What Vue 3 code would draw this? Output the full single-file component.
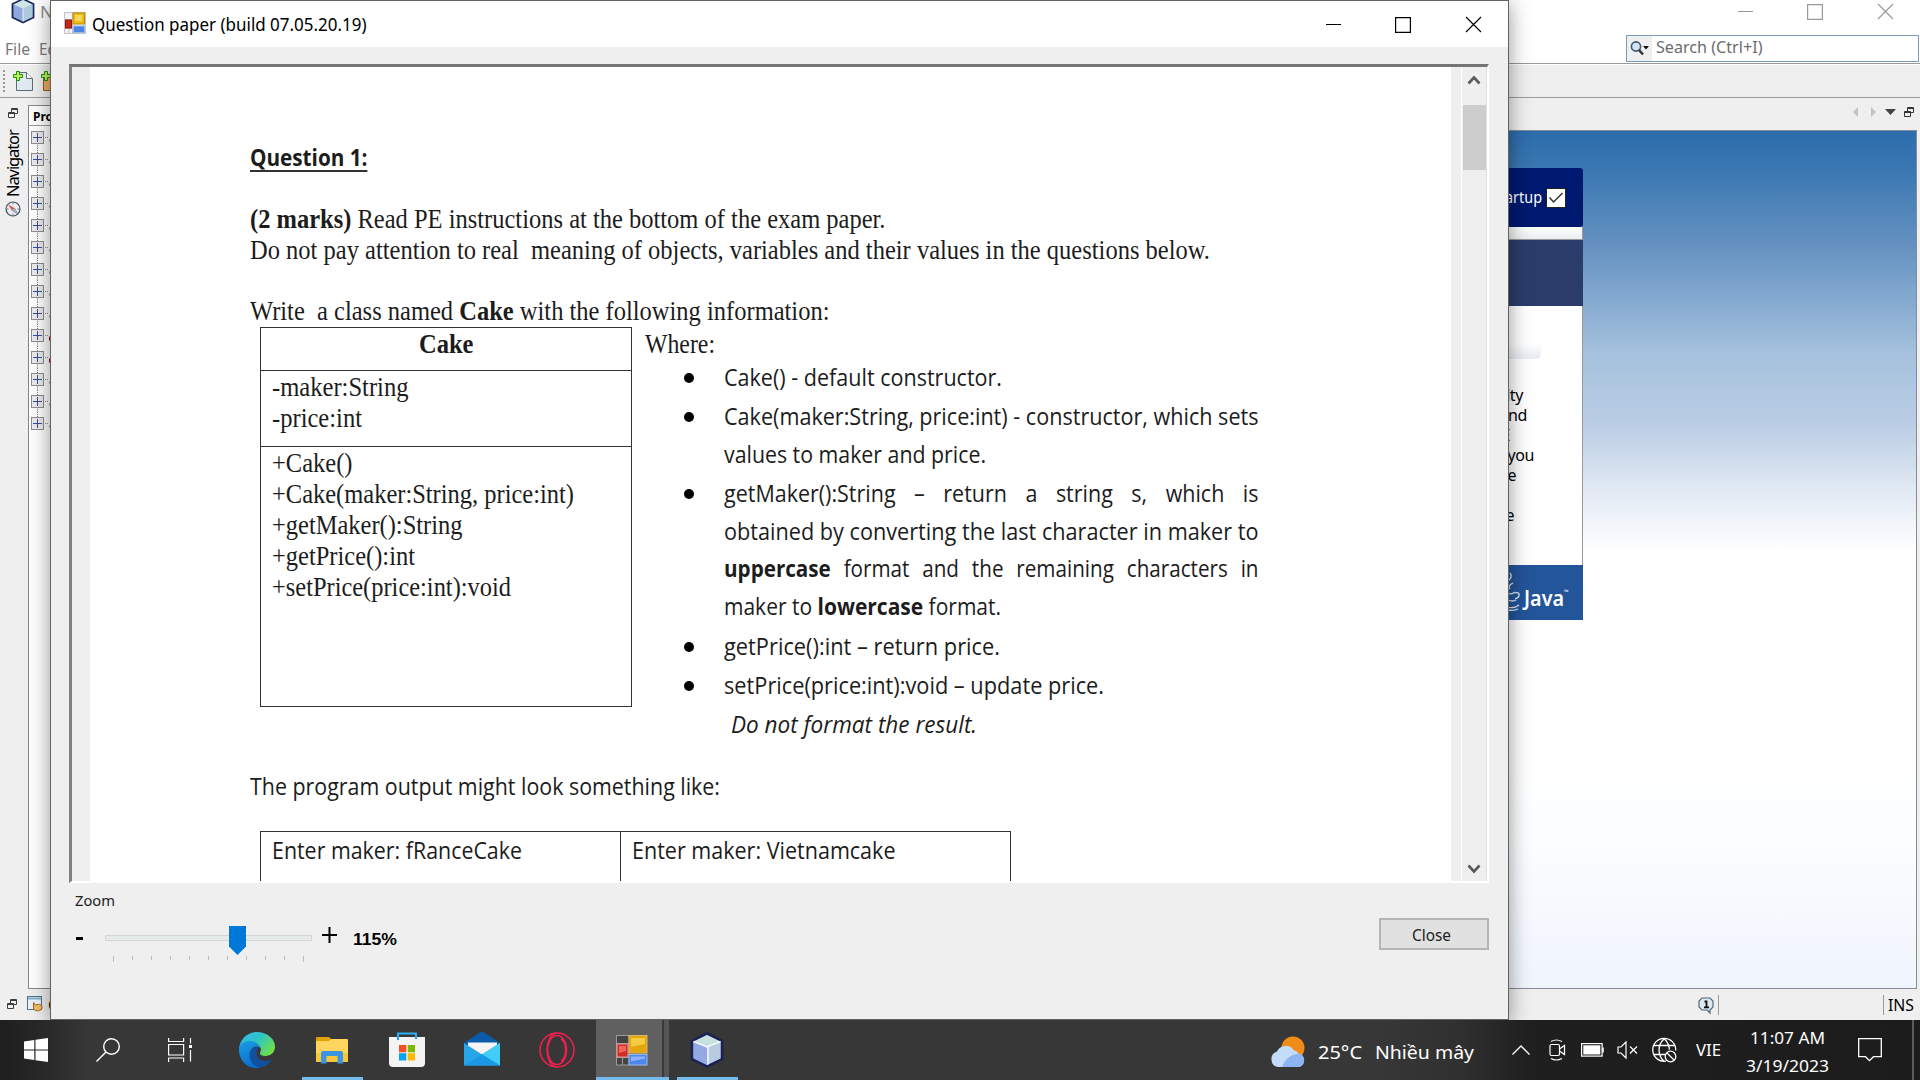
<script setup>
// Stretches a text run to a given width. With a `scale`, the glyphs keep
// that scale and only the word gaps grow (justified lines).
const vFit = {
  mounted(el, { value }) {
    const width = typeof value === 'number' ? value : value.width
    const natural = el.getBoundingClientRect().width
    let scale = width / natural
    let finalWidth = natural
    if (value.scale) {
      scale = value.scale
      const gaps = el.textContent.split(' ').length - 1
      el.style.wordSpacing = `${(width / scale - natural) / gaps}px`
      finalWidth = width / scale
    }
    el.style.transform = `scaleX(${scale})`
    el.style.marginRight = `${width - finalWidth}px`
  },
}

const fields = [
  ['-maker:String', 136.5],
  ['-price:int', 90],
]
const methods = [
  ['+Cake()', 80.5],
  ['+Cake(maker:String, price:int)', 302],
  ['+getMaker():String', 190.5],
  ['+getPrice():int', 143],
  ['+setPrice(price:int):void', 239],
]
const rules = [
  [['Cake() - default constructor.', 278]],
  [
    ['Cake(maker:String, price:int) - constructor, which sets', 534.5],
    ['values to maker and price.', 262],
  ],
  [
    ['getMaker():String – return a string s, which is', { width: 534.5, scale: 0.895 }],
    ['obtained by converting the last character in maker to', 534.5],
    ['<b>uppercase</b> format and the remaining characters in', { width: 534.5, scale: 0.86 }],
    ['maker to <b>lowercase</b> format.', 277],
  ],
  [['getPrice():int – return price.', 276]],
  [['setPrice(price:int):void – update price.', 380]],
]
const nodes = Array.from({ length: 14 }, (_, i) => i)
const ticks = Array.from({ length: 11 }, (_, i) => i)
const article = ['ity', 'and', 'E', 'you', 'e', '', 'e']
</script>

<template>
  <div class="desktop">
    <!-- IDE main window -->
    <section class="ide">
      <header class="ide-title">
        <svg class="ide-logo" width="24" height="24" viewBox="0 0 24 24">
          <path d="M12-1 22.500 4v13.500L12 22.500 1.500 17.500V4z" fill="#8fa9dc" stroke="#1b2859" stroke-width="1.800" />
          <path d="M2.500 4.500 12 0l9.500 4.500L12 8.500z" fill="#cfe6e6" />
          <path d="M12 8.500 21.500 4.500V17L12 21.500z" fill="#aec9dc" />
          <path d="M12 8.500V21.500" stroke="#eef" stroke-width="1" />
        </svg>
        <span class="ide-name">N</span>
        <svg class="ide-controls" width="156" height="17" viewBox="0 0 156 17" fill="none" stroke="#999" stroke-width="1.200">
          <path d="M0 8.500h15M69.600 1.600h14.800v14.800H69.600zM140 1l15 15M155 1l-15 15" />
        </svg>
      </header>
      <div class="ide-menu">
        <span class="menu-file" v-fit="25">File</span>
        <span class="menu-file" v-fit="27">Edit</span>
        <div class="search">
          <span class="search-icon">
            <svg width="20" height="18" viewBox="0 0 20 18">
              <circle cx="6" cy="6.500" r="4.600" fill="#cfe4f5" stroke="#44576b" stroke-width="1.600" />
              <path d="M9 10l4 4.500" stroke="#333" stroke-width="2.600" />
              <path d="M13 6h6l-3 3.500z" fill="#111" />
            </svg>
          </span>
          <span class="search-text" v-fit="106.500">Search (Ctrl+I)</span>
        </div>
      </div>
      <div class="ide-tools">
        <i class="grip"></i>
        <svg class="tool" width="20" height="20" viewBox="0 0 20 20">
          <path d="M3.500 1.500h10l6 6v12h-16z" fill="#dfe9f2" stroke="#5d6b7b" />
          <path d="M13.500 1.500v6h6" fill="#fff" stroke="#5d6b7b" />
          <path d="M3.500.5h3v3h3v3h-3v3h-3v-3h-3v-3h3z" fill="#b9f25a" stroke="#1d8a0d" />
        </svg>
        <svg class="tool2" width="20" height="20" viewBox="0 0 20 20">
          <path d="M2.500 3.500h17v16h-17z" fill="#efae63" stroke="#8c5d25" />
          <path d="M3.500.5h3v3h3v3h-3v3h-3v-3h-3v-3h3z" fill="#b9f25a" stroke="#1d8a0d" />
        </svg>
      </div>
      <div class="ide-main">
        <aside class="rail">
          <svg width="10" height="10" viewBox="0 0 10 10" fill="none" stroke="#3c3c3c">
            <path d="M3.500 4V.500h6v5H7M3.500 1.500h6M.500 4.500h6v5h-6zM.500 5.500h6" />
          </svg>
          <span class="rail-label"><span>Navigator</span></span>
          <svg class="compass" width="16" height="16" viewBox="0 0 16 16">
            <circle cx="8" cy="8" r="7" fill="#e9eff4" stroke="#444d58" stroke-width="1.200" />
            <path d="M3 3.500 9.500 7 7 9.500z" fill="#e0524a" />
            <path d="M13 13 9.500 7 7 9.500z" fill="#a9b9c8" stroke="#667" stroke-width=".5" />
            <path d="M8 1.500v2M8 12.500v2M1.500 8h2M12.500 8h2" stroke="#777" />
          </svg>
        </aside>
        <div class="projects">
          <div class="projects-head">Projects</div>
          <div class="tree">
            <div v-for="n in nodes" :key="n" class="node">
              <svg width="24" height="22" viewBox="0 0 24 22" fill="none">
                <path v-if="n < 13" d="M8.500 17.500v5" stroke="#777" stroke-dasharray="1 1" />
                <path v-if="n > 0" d="M8.500 0v5" stroke="#777" stroke-dasharray="1 1" />
                <path d="M16 11.500h4" stroke="#888" stroke-dasharray="1 1" />
                <rect x="2.500" y="5.500" width="12" height="12" fill="#ececec" stroke="#8e8e8e" />
                <path d="M4 11.500h9M8.500 7v9" stroke="#35509a" />
                <path d="M20 14.500h4" :stroke="n === 9 || n === 10 ? '#900' : '#b09a90'" :stroke-width="n === 9 || n === 10 ? 4 : 2" />
              </svg>
            </div>
          </div>
        </div>
        <div class="editor-col">
          <div class="tabs">
            <svg width="62" height="12" viewBox="0 0 62 12">
              <path d="M5 1v10L0 6zM18 1v10l5-5z" fill="#c3c3c3" />
              <path d="M32 3h11l-5.500 6z" fill="#444" />
              <path d="M54.500 5V1.500h6v5H58M54.500 2.500h6M51.500 5.500h6v5h-6zM51.500 6.500h6" fill="none" stroke="#333" />
            </svg>
          </div>
          <div class="editor">
            <div class="start">
              <div class="start-head">
                <span v-fit="37">artup</span>
                <svg width="20" height="20" viewBox="0 0 20 20">
                  <rect x=".5" y=".5" width="19" height="19" fill="#fff" stroke="#222" />
                  <path d="M3.500 9.500l4 4.500 9-9" fill="none" stroke="#333" stroke-width="1.500" />
                </svg>
              </div>
              <div class="start-strip"></div>
              <div class="start-band"></div>
              <div class="start-body">
                <div class="start-tab"></div>
                <p v-for="(t, i) in article" :key="i" :class="'art art' + i">{{ t }}</p>
              </div>
              <div class="start-java">
                <svg width="14" height="42" viewBox="0 0 14 42" fill="none" stroke="#dfe8f4" stroke-width="1.300">
                  <path d="M3 2c3 4 0 6-2 8M6 12c-4 2-5 4-3 6M0 22q5 2 8-1M8 22c5-2 6 4 0 6M1 29q5 2 8 0M0 36q7 2 12-2M1 39q6 1 10-1" />
                </svg>
                <b v-fit="40">Java</b><small>™</small>
              </div>
            </div>
          </div>
        </div>
      </div>
      <footer class="ide-status">
        <svg class="st-win" width="10" height="10" viewBox="0 0 10 10" fill="none" stroke="#3c3c3c">
          <path d="M3.500 4V.500h6v5H7M3.500 1.500h6M.500 4.500h6v5h-6zM.500 5.500h6" />
        </svg>
        <svg class="st-out" width="16" height="16" viewBox="0 0 16 16">
          <rect x=".5" y=".5" width="14" height="13" fill="#eaf1f7" stroke="#5d7184" />
          <path d="M1 1.500h13v2H1z" fill="#7db0d6" />
          <path d="M6.500 6.500l2 2.500c4-1.500 7 0 6.500 3s-6 4-8.500 1z" fill="#f2bd62" stroke="#9c671b" />
        </svg>
        <span class="st-o">Output</span>
        <svg class="st-note" width="17" height="17" viewBox="0 0 17 17">
          <path d="M4 1h8l3 3v6l-3 3v3l-3-3H4l-3-3V4z" fill="#dce8f1" stroke="#53687a" stroke-width="1.200" />
          <path d="M6.500 4.500h2V10M6 10.300h5" fill="none" stroke="#111" stroke-width="1.800" />
        </svg>
        <i class="sep"></i>
        <i class="sep sep2"></i>
        <span class="ins" v-fit="26">INS</span>
      </footer>
    </section>

    <!-- Question paper window -->
    <section class="dialog">
      <header class="dlg-title">
        <svg width="22" height="22" viewBox="0 0 22 22">
          <rect x=".5" y=".5" width="21" height="21" fill="#f3f3f3" stroke="#c4c4c4" />
          <path d="M8.500 1v20M1 7.500h8M1 16.500h8M5 16v5" stroke="#c4c4c4" />
          <rect x="9" y="1" width="11.500" height="11" fill="#f2b90f" stroke="#b98c0a" />
          <rect x="11" y="3" width="7" height="6" fill="#f9d75a" />
          <rect x="1.500" y="8" width="6" height="8" fill="#c4261b" stroke="#8f1a12" />
          <rect x="9.500" y="14" width="11" height="6.500" fill="#4a86e8" stroke="#9db9e8" />
        </svg>
        <span class="dlg-name" v-fit="274.500">Question paper (build 07.05.20.19)</span>
        <svg class="dlg-controls" width="156" height="17" viewBox="0 0 156 17" fill="none" stroke="#000" stroke-width="1.200">
          <path d="M0 8.500h15M69.600 1.600h14.800v14.800H69.600zM140 1l15 15M155 1l-15 15" />
        </svg>
      </header>
      <div class="viewer">
        <div class="page">
          <h1><span class="sans" v-fit="117.500">Question 1:</span></h1>
          <p class="line gap-a"><span v-fit="635.500"><b>(2 marks)</b> Read PE instructions at the bottom of the exam paper.</span></p>
          <p class="line"><span v-fit="960">Do not pay attention to real&nbsp; meaning of objects, variables and their values in the questions below.</span></p>
          <p class="line gap-b"><span v-fit="579.500">Write&nbsp; a class named <b>Cake</b> with the following information:</span></p>
          <div class="spec">
            <div class="uml">
              <div class="uml-name"><b v-fit="54.500">Cake</b></div>
              <div class="uml-fields">
                <p v-for="f in fields" :key="f[0]" class="line"><span v-fit="f[1]">{{ f[0] }}</span></p>
              </div>
              <div class="uml-methods">
                <p v-for="m in methods" :key="m[0]" class="line"><span v-fit="m[1]">{{ m[0] }}</span></p>
              </div>
            </div>
            <div class="where">
              <p class="line"><span v-fit="70">Where:</span></p>
              <ul>
                <li v-for="(r, i) in rules" :key="i">
                  <p v-for="l in r" :key="l[0]"><span class="sans" v-fit="l[1]" v-html="l[0]"></span></p>
                </li>
              </ul>
              <p class="noformat"><i class="sans" v-fit="246">Do not format the result.</i></p>
            </div>
          </div>
          <p class="line gap-c"><span class="sans" v-fit="470">The program output might look something like:</span></p>
          <div class="samples">
            <div class="s1"><span class="sans" v-fit="250">Enter maker: fRanceCake</span></div>
            <div class="s2"><span class="sans" v-fit="263.500">Enter maker: Vietnamcake</span></div>
          </div>
        </div>
        <div class="scroll">
          <svg width="14" height="10" viewBox="0 0 14 10"><path d="M1.500 8.500 7 2.500l5.500 6" fill="none" stroke="#5a5a5a" stroke-width="2.600" /></svg>
          <div class="thumb"></div>
          <svg class="down" width="14" height="10" viewBox="0 0 14 10"><path d="M1.500 1.500 7 7.500l5.500-6" fill="none" stroke="#5a5a5a" stroke-width="2.600" /></svg>
        </div>
      </div>
      <div class="dlg-foot">
        <div class="zoom">
          <div class="zoom-label"><span v-fit="40">Zoom</span></div>
          <div class="zoom-row">
            <i class="minus"></i>
            <div class="slider">
              <div class="track">
                <svg class="knob" width="17" height="29" viewBox="0 0 17 29"><path d="M0 0h17v20.500L8.500 29 0 20.500z" fill="#0078d7" /></svg>
              </div>
              <div class="ticks"><i v-for="t in ticks" :key="t"></i></div>
            </div>
            <svg class="plus" width="15" height="16" viewBox="0 0 15 16"><path d="M0 8h15M7.500 0v16" stroke="#000" stroke-width="2" /></svg>
            <b class="pct"><span v-fit="44">115%</span></b>
          </div>
        </div>
        <button class="close"><span v-fit="39">Close</span></button>
      </div>
    </section>

    <!-- Taskbar -->
    <nav class="taskbar">
      <div class="sys">
        <svg width="24" height="24" viewBox="0 0 24 24" fill="#fff"><path d="M0 3.500 10.300 2v9.500H0zM11.500 1.800 24 0v11.500H11.500zM0 12.500h10.300V22L0 20.500zM11.500 12.500H24V24l-12.500-1.800z" /></svg>
      </div>
      <div class="sys">
        <svg width="24" height="24" viewBox="0 0 24 24" fill="none" stroke="#fff" stroke-width="1.400"><circle cx="15.500" cy="8.500" r="7.800" /><path d="M10 14 .5 23.500" /></svg>
      </div>
      <div class="sys">
        <svg width="24" height="24" viewBox="0 0 24 24" fill="none" stroke="#fff" stroke-width="1.200"><path d="M.600 0v3.500h15V0M.600 6.500h15v10.500h-15zM.600 24v-4h15v4M22.500 0v5.500M22.500 12v11.500" /><rect x="21" y="7" width="3" height="3" fill="#fff" stroke="none" /></svg>
      </div>
      <div class="task first">
        <svg width="36" height="36" viewBox="0 0 36 36">
          <defs>
            <linearGradient id="eg" x1="0" y1="0" x2="1" y2=".6"><stop offset="0" stop-color="#38b6f1" /><stop offset=".5" stop-color="#2cc3c9" /><stop offset="1" stop-color="#6be04d" /></linearGradient>
            <linearGradient id="eb" x1="0" y1="0" x2=".3" y2="1"><stop offset="0" stop-color="#1b9de2" /><stop offset="1" stop-color="#0b6fd0" /></linearGradient>
          </defs>
          <path d="M0 18C0 8 8 0 18 0s18 7 18 14.500c0 6-4.500 9.500-9.500 9.500-4 0-6.500-1.500-5.500-3.500 2.500-4 0-7-4-8C10 11 2 14 0 18z" fill="url(#eg)" />
          <path d="M0 18C0 11 6 8.500 11.500 9c5.500.5 9.500 4 10 8-3-5-10-2-10 5 0 6 4.500 12 10 13.600C9 38 0 29 0 18z" fill="url(#eb)" />
          <path d="M11 20c-2 8 4 15 10.500 15.600 5-.9 9-4 11.500-8-6 3-15 1.500-15.500-6.500 0-2.500.8-4 2-5.500-4-1.500-7.500 1-8.500 4.400z" fill="#124f9c" />
        </svg>
      </div>
      <div class="task open">
        <svg width="32" height="27" viewBox="0 0 32 27">
          <path d="M0 1q0-1 1-1h12l2 2v4H0z" fill="#e2a100" />
          <path d="M0 4h13l2-2h16q1 0 1 1v22H0z" fill="#ffd560" />
          <path d="M0 16h32v9H0z" fill="#f8c63c" />
          <path d="M5 26.500V16q0-2 2-2h18q2 0 2 2v10.500h-5.500V19h-11v7.500z" fill="#3a96e0" />
        </svg>
      </div>
      <div class="task">
        <svg class="store" width="36" height="36" viewBox="0 0 36 36">
          <path d="M9 8V1.500h18V8" fill="none" stroke="#2db3f5" stroke-width="2" />
          <path d="M0 5h36v26q0 4-4 4H4q-4 0-4-4z" fill="#f4f4f4" />
          <path d="M9 5v3M27 5v2" stroke="#1a9be8" stroke-width="2" />
          <path d="M10 13h7.300v7.300H10z" fill="#f25022" /><path d="M18.700 13H26v7.300h-7.300z" fill="#7fba00" />
          <path d="M10 21.200h7.300v7.300H10z" fill="#00a4ef" /><path d="M18.700 21.200H26v7.300h-7.300z" fill="#ffb900" />
        </svg>
      </div>
      <div class="task">
        <svg class="mail" width="36" height="34" viewBox="0 0 36 34">
          <path d="M0 11 15 1q3-2 6 0l15 10v6H0z" fill="#0a5cab" />
          <path d="M4 10.500h29V22H4z" fill="#f5f5f5" />
          <path d="M0 11l18 11.500L36 11v22.500H0z" fill="#27a6ea" />
          <path d="M36 11v22.500L18 22.500z" fill="#41cdf6" />
          <path d="M0 33.500h36L18 22.500z" fill="#1b98e5" />
        </svg>
      </div>
      <div class="task">
        <svg width="36" height="36" viewBox="0 0 36 36" fill="none" stroke="#f3204f">
          <circle cx="18" cy="18" r="17" stroke-width="1.500" />
          <ellipse cx="18" cy="18" rx="9.500" ry="14.500" stroke-width="1.500" />
          <path d="M17 1C5 4 5 32 17 35M22 7c6 4 6 18 0 22" stroke-width="1.300" />
        </svg>
      </div>
      <div class="task open active">
        <svg width="32" height="31" viewBox="0 0 32 31" fill="none" stroke="#9c9c9c">
          <path d="M.5.5h12.500v29.500H.500zM.500 8.500H13M.500 22.500H13M6.500 22.500v7.500" fill="#444" />
          <rect x="13" y=".5" width="18" height="17.500" fill="#e5a50c" stroke="#d6b968" />
          <path d="M15 3h14v6l-14 3z" fill="#f6cb44" stroke="none" />
          <rect x="1" y="9" width="11" height="13" fill="#cf2e26" stroke="#d99" />
          <path d="M3 11h7v5l-7 2z" fill="#ee665c" stroke="none" />
          <rect x="13" y="19.500" width="18" height="10.500" fill="#4f86ee" stroke="#9db7e6" />
          <path d="M15 21.500h14v2l-14 3z" fill="#8db2fa" stroke="none" />
        </svg>
      </div>
      <div class="task open">
        <svg width="34" height="36" viewBox="0 0 34 36">
          <path d="M17 1.500 32 9v18L17 34.500 2 27V9z" fill="#7f97d8" stroke="#1c2152" stroke-width="2.600" />
          <path d="M3.500 9.500 17 3l13.500 6.500L17 15z" fill="#c7e2de" />
          <path d="M17 15 30.500 9.500v17L17 33z" fill="#b9cbe0" />
          <path d="M3.500 9.500 17 15v18L3.500 26.500z" fill="#93a9e4" />
          <path d="M3.500 9.500 17 15l13.500-5.500M18 15v17.500" stroke="#f2f8ff" stroke-width="1.500" fill="none" />
        </svg>
      </div>

      <div class="tray">
        <svg class="weather" width="37" height="32" viewBox="0 0 37 32">
          <circle cx="22" cy="12" r="11.500" fill="#f08a18" />
          <path d="M7 31a8 8 0 0 1-1-15.500A9.500 9.500 0 0 1 22.500 14a8 8 0 0 1 5 3.500A7 7 0 0 1 28 31z" fill="#c4dcfa" />
          <path d="M11 31c3-8 9-13 17-13.500A7 7 0 0 1 28 31z" fill="#8db4f3" />
        </svg>
        <span class="temp" v-fit="44">25°C</span>
        <span class="cond" v-fit="99">Nhiều mây</span>
        <svg class="t-up" width="18" height="10" viewBox="0 0 18 10" fill="none" stroke="#fff" stroke-width="1.300"><path d="M.5 9.500 9 1l8.500 8.500" /></svg>
        <svg class="t-meet" width="17" height="22" viewBox="0 0 17 22" fill="none" stroke="#fff" stroke-width="1.200"><rect x="1" y="5.500" width="9.500" height="11" rx="1.500" /><path d="M10.500 10l5-3.500v9l-5-3.500M2 2.500q5-3 11 0M2 19.500q5 3 11 0" /></svg>
        <svg class="t-bat" width="23" height="14" viewBox="0 0 23 14"><rect x=".6" y=".6" width="20.500" height="12.500" fill="none" stroke="#fff" stroke-width="1.200" /><rect x="2.300" y="2.300" width="17" height="9.200" fill="#fff" /><path d="M22 4.500v5" stroke="#fff" stroke-width="1.600" /></svg>
        <svg class="t-vol" width="21" height="18" viewBox="0 0 21 18" fill="none" stroke="#fff" stroke-width="1.200"><path d="M1 6h3l5-5v16l-5-5H1zM13 5.500l7 7M20 5.500l-7 7" /></svg>
        <svg class="t-net" width="25" height="25" viewBox="0 0 25 25" fill="none" stroke="#fff" stroke-width="1.300"><path d="M14 23.200A11.500 11.500 0 1 1 23.700 12.500M12.300.7c-7 6-7 17 0 22.600M12.300.7c3.500 3.500 5 7 5 11M2 7.500h20.500M1.500 16.500H13" /><circle cx="18.500" cy="18.500" r="5.300" /><path d="M15 15l7 7" /></svg>
        <span class="t-lang" v-fit="25">VIE</span>
        <div class="clock">
          <div><span v-fit="75">11:07 AM</span></div>
          <div><span v-fit="83">3/19/2023</span></div>
        </div>
        <svg class="t-note" width="24" height="24" viewBox="0 0 24 24" fill="none" stroke="#fff" stroke-width="1.300"><path d="M.7.700h22.600v18H15.500L11.500 22.700l-4-4H.700z" /></svg>
        <i class="show"></i>
      </div>
    </nav>
  </div>
</template>

<style>
html,
body {
  margin: 0;
  overflow: hidden;
  background: #efefef;
}
</style>

<style scoped>
.desktop {
  position: relative;
  width: 1920px;
  height: 1080px;
  overflow: hidden;
  display: flex;
  flex-direction: column;
  font-family: "Noto Sans", "Open Sans", sans-serif;
  font-size: 17px;
  color: #000;
}
.desktop * { box-sizing: border-box; }
p, h1, ul { margin: 0; padding: 0; }
svg { display: block; flex: none; overflow: visible; }
span, .desktop b { white-space: pre; }
.desktop [style*="scaleX"] {
  display: inline-block;
}
.dlg-name, .ins, .search-text, .menu-file, .temp, .cond, .t-lang { flex: none; }
.desktop :is(span, b, i)[style] { transform-origin: 0 0; white-space: pre; }

/* IDE */
.ide { width: 1920px; height: 1020px; display: flex; flex-direction: column; background: #efefef; }
.ide-title { height: 31px; display: flex; align-items: flex-start; background: #fff; color: #888; padding-left: 11px; }
.ide-name { margin-left: 5px; line-height: 23px; font-size: 17px; }
.ide-controls { margin: 3px 26px 0 auto; }
.ide-menu { height: 33px; display: flex; background: #fff; border-bottom: 1px solid #9a9a9a; color: #777; padding-left: 5px; font-size: 17px; line-height: 35px; gap: 9px; }
.search { display: flex; margin: 4px 1px 0 auto; width: 293px; height: 27px; border: 1px solid #7a9abf; background: #fff; line-height: 22px; font-size: 16px; color: #6c6c6c; }
.search-icon { width: 25px; background: #efefef; padding: 4px 0 0 3px; margin-right: 4px; }
.ide-tools { height: 34px; display: flex; align-items: flex-start; padding: 6px 0 0 3px; border-bottom: 1px solid #9a9a9a; border-top: 1px solid #fff; }
.grip { width: 2px; height: 22px; margin-top: -1px; background: repeating-linear-gradient(#999 0 2px, transparent 2px 4px); }
.tool { margin-left: 8px; }
.tool2 { margin-left: 8px; }
.ide-main { height: 891px; display: flex; }
.rail { width: 28px; display: flex; flex-direction: column; padding: 10px 0 0 8px; flex: none; }
.rail-label { height: 67px; width: 20px; margin: 12px 0 0 -5px; writing-mode: vertical-rl; transform: rotate(180deg); font-size: 16.500px; line-height: 20px; }
.rail-label span { letter-spacing: -1.100px; }
.compass { margin: 4px 0 0 -3px; }
.projects { width: 422px; margin-top: 7px; border: 1px solid #85858f; background: #fff; flex: none; }
.projects-head { height: 20px; border-bottom: 1px solid #999; padding-left: 4px; font-weight: 700; font-size: 12px; line-height: 21px; }
.node { height: 22px; }
.editor-col { flex: 1; display: flex; flex-direction: column; padding-right: 3px; }
.tabs { height: 32px; display: flex; justify-content: flex-end; padding: 8px 2px 0 0; }
.editor {
  flex: 1; display: flex; justify-content: flex-end; align-items: flex-start;
  border: 1px solid #858c98; padding: 37px 333px 0 0;
  background: linear-gradient(#2b6cab 0, #3c79b3 5%, #6390c0 13%, #7ba3cc 18%, #a5c1dd 26%, #b9cde4 34%, #dfe8f3 41.500%, #fff 49%, #fff 72%, #fbfdff 83%, #f0f4fd 100%);
}
.start { width: 320px; display: flex; flex-direction: column; }
.start-head { height: 59px; border-radius: 3px; background: #001970; display: flex; justify-content: flex-end; align-items: center; color: #fff; font-size: 16px; padding-right: 17px; }
.start-head > svg { margin-left: 4px; }
.start-head > span { line-height: 20px; margin-top: -2px; }
.start-strip { height: 13px; background: linear-gradient(#fbfffb, #eceff2); border-right: 1px solid #999; border-bottom: 1px solid #999; }
.start-band { height: 66px; background: #2b3c6b; }
.start-body { height: 259px; background: #fff; border-right: 1px solid #999; padding-top: 37px; }
.start-tab { width: 278px; height: 16px; border-bottom-right-radius: 5px; background: linear-gradient(#fff, #e6eaf0); margin-bottom: 25.500px; }
.art { height: 20px; line-height: 20px; font-size: 16px; text-align: right; padding-right: 59px; letter-spacing: -.4px; }
.art1 { padding-right: 55px; }
.art2 { padding-right: 72px; }
.art3 { padding-right: 48px; }
.art4 { padding-right: 66px; }
.art6 { padding-right: 68px; }
.start-java { height: 55px; background: #23559b; display: flex; align-items: flex-start; color: #fff; padding: 6px 0 0 244px; }
.start-java b { font-size: 22px; line-height: 30px; margin: 11px 0 0 3px; font-weight: 600; }
.start-java small { font-size: 6px; margin-top: 17px; }
.ide-status { flex: 1; display: flex; align-items: flex-start; padding: 7px 6px 0 7px; font-size: 17px; }
.st-win { margin-top: 3px; }
.st-out { margin-left: 10px; }
.st-o { margin-left: 5px; width: 60px; line-height: 17px; }
.st-note { margin-left: auto; margin-top: 1px; }
.sep { width: 1px; height: 20px; background: #999; margin-left: 3px; margin-top: -1px; }
.sep2 { margin-left: 164px; }
.ins { margin-left: 4px; line-height: 19px; font-size: 16px; }

/* Dialog */
.dialog {
  position: absolute; left: 50px; top: 0; width: 1459px; height: 1020px;
  display: flex; flex-direction: column;
  background: #efefef; border: 1px solid #626262;
  box-shadow: 0 4px 20px rgba(0, 0, 0, .42);
}
.dlg-title { height: 46px; display: flex; align-items: flex-start; padding: 11px 26px 0 13px; background: #fff; }
.dlg-name { margin-left: 6px; font-size: 17.500px; line-height: 24px; }
.dlg-controls { margin: 4px 0 0 auto; }
.viewer {
  margin: 17px 19px 0 18px; height: 819px; display: flex; overflow: hidden;
  border-top: 3px solid #757575; border-left: 3px solid #808080;
  border-right: 2px solid #fff; border-bottom: 2px solid #fff;
  padding-left: 18px;
}
.page {
  width: 1361px; flex: none; background: #fff; padding: 75px 0 0 160px;
  font-family: "Liberation Serif", serif; font-size: 27px; line-height: 31px; color: #1c1c1c;
}
.page p, .page h1, .page li p { white-space: nowrap; }
.sans { font-family: "Open Sans", "Noto Sans", sans-serif; font-size: 24px; }
.page h1 { height: 31px; line-height: 30px; font-size: 24px; font-weight: 700; }
.page h1 span { height: 30px; border-bottom: 2px solid #333; line-height: 30px; vertical-align: top; }
.line { height: 31px; line-height: 31px; }
.line > span { vertical-align: top; }
.gap-a { margin-top: 30.500px; }
.gap-b { margin-top: 30.500px; }
.gap-c { margin-top: 27.500px; }
.spec { display: flex; height: 415px; margin-top: 0; }
.uml { width: 372px; height: 380px; margin-left: 9.500px; border: 1px solid #333; flex: none; }
.uml-name { height: 42px; text-align: center; padding: 1px 0 0 1px; line-height: 31px; }
.uml-fields { height: 76px; border-top: 1px solid #333; padding: 1px 0 0 11px; }
.uml-methods { border-top: 1px solid #333; padding: .5px 0 0 11px; }
.uml-methods .line { line-height: 30.500px; }
.where { margin-left: 13.500px; padding-top: 1.500px; }
.where ul { list-style: none; margin-top: -2px; padding-left: 79px; }
.where li { position: relative; margin-bottom: 1.500px; }
.where li::before { content: ""; position: absolute; left: -40.500px; top: 15px; width: 10px; height: 10px; border-radius: 50%; background: #000; }
.where li p, .noformat { height: 37.800px; line-height: 37.800px; }
.where li p > span, .noformat > i { vertical-align: top; }
.noformat { padding-left: 86px; }
.samples { display: flex; margin: 30.500px 0 0 9.500px; }
.samples > div { height: 60px; border: 1px solid #333; border-width: 1px 0 0 1px; padding: 1.500px 0 0 11.500px; }
.samples .s1 { width: 360.500px; }
.samples .s2 { width: 391px; border-right-width: 1px; padding-left: 10.500px; }
.scroll { margin-left: auto; width: 26px; display: flex; flex-direction: column; align-items: center; padding-top: 8px; border-left: 1px solid #fff; border-right: 1px solid #e0e0e0; }
.thumb { width: 23px; height: 65px; margin-top: 20px; background: #cdcdcd; }
.down { margin: auto 0 7px; }
.dlg-foot { flex: 1; display: flex; justify-content: space-between; padding: 0 19px 0 24px; }
.zoom-label { height: 32px; line-height: 34px; font-size: 15px; color: #222; }
.zoom-row { display: flex; height: 50px; padding-top: 10px; }
.minus { width: 7px; height: 2.500px; background: #000; margin: 12px 0 0 1px; }
.slider { width: 207px; margin: 10px 0 0 22px; }
.track { position: relative; height: 6px; border: 1px solid #d3d6d6; background: #e6eaea; }
.knob { position: absolute; left: 123px; top: -10px; }
.ticks { display: flex; justify-content: space-between; padding: 15px 7.500px 0 7.500px; }
.ticks i { width: 1px; height: 4px; background: #bdbdbd; }
.ticks i:first-child, .ticks i:last-child { height: 6px; }
.plus { margin: 2px 0 0 10px; }
.pct { margin: 0 0 0 15.500px; font-family: "Liberation Sans", sans-serif; font-size: 17px; line-height: 30px; }
.close {
  width: 110px; height: 32px; margin-top: 35px; padding: 1px 5px 0 0; border: 2px solid #b4b4b4; background: #e1e1e1;
  font: 15.500px/26px "Noto Sans", sans-serif; color: #222;
}

/* Taskbar */
.taskbar {
  position: relative; height: 60px; width: 1920px; display: flex; align-items: stretch;
  background: linear-gradient(90deg, #1f1f1f 0, #262626 35px, #373737 90px, #373737 1380px, #303030 1460px, #1f1f1f 1530px, #1c1c1c 100%);
  color: #fff;
}
.sys { width: 72px; display: flex; align-items: center; justify-content: center; }
.task { position: relative; width: 75px; display: flex; align-items: center; justify-content: center; }
.task.first { margin-left: 3.500px; }
.task.open::after { content: ""; position: absolute; left: 7px; bottom: 0; width: 61px; height: 3px; background: #76b9ed; }
.task.active { background: linear-gradient(90deg, transparent 1px, #606060 1px 67px, #3a3a3a 67px 69px, #555 69px 74px, transparent 74px); }
.task.active::after { left: 1px; width: 73px; }
.store { margin-left: -1px; }
.mail { margin-top: -2px; }
.tray { margin-left: auto; display: flex; align-items: center; font-size: 18.500px; }
.weather { margin-top: 3px; }
.temp { margin-left: 10px; line-height: 24px; margin-top: 3px; }
.cond { margin-left: 13px; line-height: 24px; margin-top: 3px; }
.t-up { margin-left: 38px; }
.t-meet { margin-left: 19px; }
.t-bat { margin-left: 15px; }
.t-vol { margin-left: 13px; }
.t-net { margin-left: 14px; }
.t-lang { margin-left: 19px; font-size: 17px; line-height: 24px; }
.clock { margin-left: 25px; width: 83px; text-align: center; font-size: 17px; line-height: 27.500px; padding-top: 3px; white-space: nowrap; }
.t-note { margin-left: 29px; }
.show { width: 2px; height: 60px; background: #5c5c5c; margin: 0 6px 0 30px; }
</style>
